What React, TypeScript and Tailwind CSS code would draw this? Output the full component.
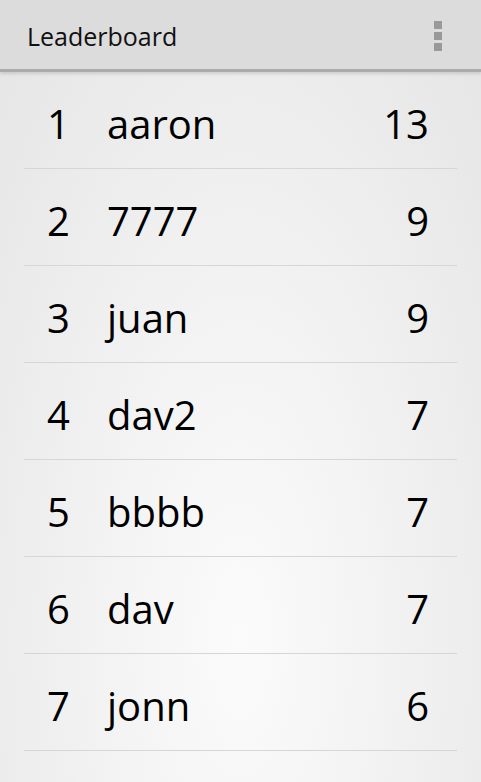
import React from "react";

const rows = [
  { rank: 1, name: "aaron", score: 13 },
  { rank: 2, name: "7777", score: 9 },
  { rank: 3, name: "juan", score: 9 },
  { rank: 4, name: "dav2", score: 7 },
  { rank: 5, name: "bbbb", score: 7 },
  { rank: 6, name: "dav", score: 7 },
  { rank: 7, name: "jonn", score: 6 },
];

export default function App() {
  return (
    <div
      className="w-[481px] h-[782px] overflow-hidden flex flex-col text-black"
      style={{ fontFamily: '"Open Sans", "Noto Sans", sans-serif' }}
    >
      <div className="relative z-10 h-[72px] shrink-0 bg-[#dcdcdc] flex items-center justify-between pl-[27px] pr-[39px] pt-[3px] border-b-[3px] border-[#ababab] shadow-[0_2px_3px_rgba(0,0,0,0.12)]">
        <span className="text-[25px] leading-none text-[#111]">Leaderboard</span>
        <div className="flex flex-col gap-[3px]">
          <div className="w-[8px] h-[8px] bg-[#999]" />
          <div className="w-[8px] h-[8px] bg-[#999]" />
          <div className="w-[8px] h-[8px] bg-[#999]" />
        </div>
      </div>
      <div className="flex-1 bg-[radial-gradient(ellipse_at_50%_80%,#fbfbfb_0%,#f3f3f3_40%,#e6e6e6_100%)]">
        <div className="px-[24px]">
          {rows.map((r) => (
            <div
              key={r.rank}
              className="h-[97px] flex items-center border-b border-[#d6d6d6] pl-[23px] pr-[28px] pt-[8px] text-[40px] leading-none"
            >
              <span className="w-[60px]">{r.rank}</span>
              <span className="flex-1">{r.name}</span>
              <span>{r.score}</span>
            </div>
          ))}
        </div>
      </div>
    </div>
  );
}
